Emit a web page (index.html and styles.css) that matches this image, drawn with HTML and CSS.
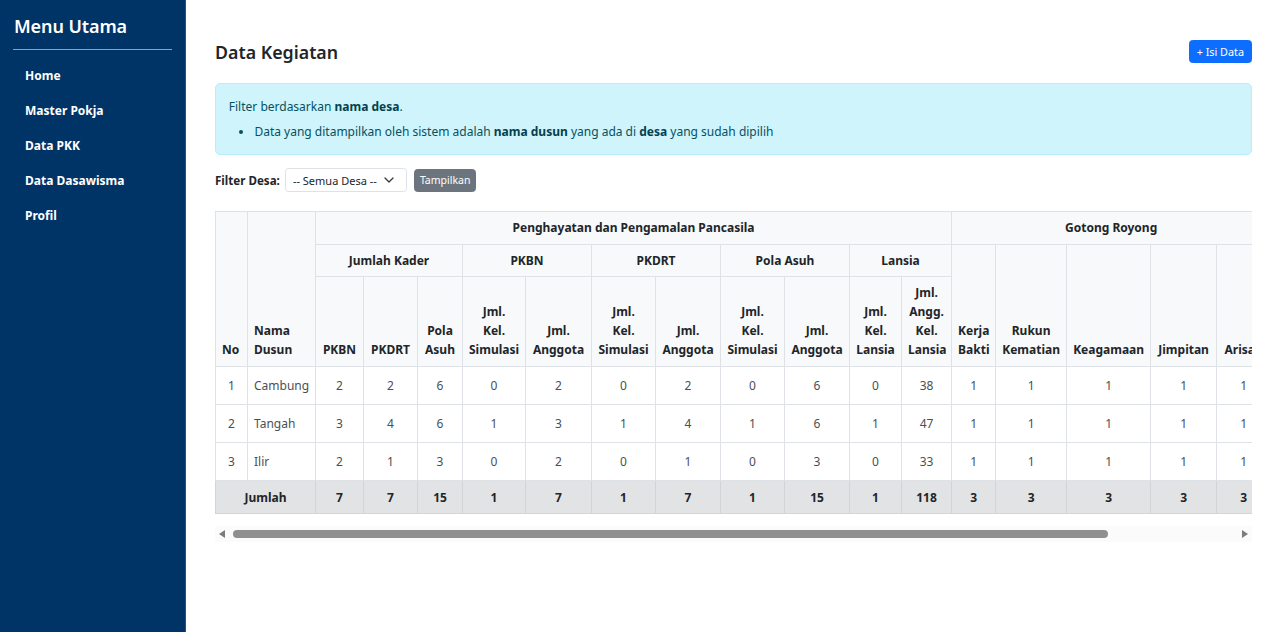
FILE: index.html
```html
<!DOCTYPE html>
<html lang="id">
<head>
<meta charset="utf-8">
<title>Data Kegiatan</title>
<link rel="stylesheet" href="styles.css">
</head>
<body>
<div class="layout">
  <aside class="sidebar">
    <h4 class="brand">Menu Utama</h4>
    <hr class="brand-line">
    <nav class="nav">
      <a class="nav-link" href="#">Home</a>
      <a class="nav-link" href="#">Master Pokja</a>
      <a class="nav-link" href="#">Data PKK</a>
      <a class="nav-link" href="#">Data Dasawisma</a>
      <a class="nav-link" href="#">Profil</a>
    </nav>
  </aside>

  <main class="main">
    <div class="page-head">
      <h3 class="page-title">Data Kegiatan</h3>
      <a class="btn btn-primary" href="#">+ Isi Data</a>
    </div>

    <div class="alert">
      <p class="alert-line">Filter berdasarkan <b>nama desa</b>.</p>
      <ul class="alert-list">
        <li>Data yang ditampilkan oleh sistem adalah <b>nama dusun</b> yang ada di <b>desa</b> yang sudah dipilih</li>
      </ul>
    </div>

    <form class="filter">
      <label class="filter-label">Filter Desa:</label>
      <div class="select">
        <span>-- Semua Desa --</span>
        <svg class="chev" width="10" height="6" viewBox="0 0 10 6"><path d="M1 1l4 4 4-4" fill="none" stroke="#343a40" stroke-width="1.3" stroke-linecap="round" stroke-linejoin="round"/></svg>
      </div>
      <button class="btn btn-secondary" type="button">Tampilkan</button>
    </form>

    <div class="table-wrap">
      <table class="data">
        <colgroup>
          <col class="c32"><col class="c68"><col class="c48"><col class="c54"><col class="c45">
          <col class="c63"><col class="c66"><col class="c64"><col class="c65"><col class="c64"><col class="c65">
          <col class="c52"><col class="c50">
          <col class="c44"><col class="c71"><col class="c84"><col class="c66"><col class="c54">
          <col class="c134">
        </colgroup>
        <thead>
          <tr class="h1">
            <th rowspan="3" class="tl">No</th>
            <th rowspan="3" class="tl">Nama<br>Dusun</th>
            <th colspan="11" class="mid">Penghayatan dan Pengamalan Pancasila</th>
            <th colspan="5" class="mid">Gotong Royong</th>
            <th rowspan="3">Keterangan</th>
          </tr>
          <tr class="h2">
            <th colspan="3" class="mid">Jumlah Kader</th>
            <th colspan="2" class="mid">PKBN</th>
            <th colspan="2" class="mid">PKDRT</th>
            <th colspan="2" class="mid">Pola Asuh</th>
            <th colspan="2" class="mid">Lansia</th>
            <th rowspan="2">Kerja<br>Bakti</th>
            <th rowspan="2">Rukun<br>Kematian</th>
            <th rowspan="2">Keagamaan</th>
            <th rowspan="2">Jimpitan</th>
            <th rowspan="2">Arisan</th>
          </tr>
          <tr class="h3">
            <th>PKBN</th>
            <th>PKDRT</th>
            <th>Pola<br>Asuh</th>
            <th>Jml.<br>Kel.<br>Simulasi</th>
            <th>Jml.<br>Anggota</th>
            <th>Jml.<br>Kel.<br>Simulasi</th>
            <th>Jml.<br>Anggota</th>
            <th>Jml.<br>Kel.<br>Simulasi</th>
            <th>Jml.<br>Anggota</th>
            <th>Jml.<br>Kel.<br>Lansia</th>
            <th>Jml.<br>Angg.<br>Kel.<br>Lansia</th>
          </tr>
        </thead>
        <tbody>
          <tr>
            <td>1</td><td class="tl">Cambung</td>
            <td>2</td><td>2</td><td>6</td><td>0</td><td>2</td><td>0</td><td>2</td><td>0</td><td>6</td><td>0</td><td>38</td>
            <td>1</td><td>1</td><td>1</td><td>1</td><td>1</td><td>-</td>
          </tr>
          <tr>
            <td>2</td><td class="tl">Tangah</td>
            <td>3</td><td>4</td><td>6</td><td>1</td><td>3</td><td>1</td><td>4</td><td>1</td><td>6</td><td>1</td><td>47</td>
            <td>1</td><td>1</td><td>1</td><td>1</td><td>1</td><td>-</td>
          </tr>
          <tr>
            <td>3</td><td class="tl">Ilir</td>
            <td>2</td><td>1</td><td>3</td><td>0</td><td>2</td><td>0</td><td>1</td><td>0</td><td>3</td><td>0</td><td>33</td>
            <td>1</td><td>1</td><td>1</td><td>1</td><td>1</td><td>-</td>
          </tr>
        </tbody>
        <tfoot>
          <tr>
            <th colspan="2">Jumlah</th>
            <th>7</th><th>7</th><th>15</th><th>1</th><th>7</th><th>1</th><th>7</th><th>1</th><th>15</th><th>1</th><th>118</th>
            <th>3</th><th>3</th><th>3</th><th>3</th><th>3</th><th></th>
          </tr>
        </tfoot>
      </table>
    </div>
    <div class="hscroll" aria-hidden="true">
      <span class="arrow arrow-left"></span>
      <div class="track"><div class="thumb"></div></div>
      <span class="arrow arrow-right"></span>
    </div>
  </main>
</div>
</body>
</html>
```

FILE: styles.css
```css
* { box-sizing: border-box; }

html, body {
  margin: 0;
  padding: 0;
  background: #ffffff;
}

body {
  font-family: "Noto Sans", "Open Sans", "Liberation Sans", sans-serif;
  font-size: 12px;
  line-height: 19.2px;
  color: #212529;
}

.layout {
  display: flex;
  min-height: 632px;
}

/* Sidebar */
.sidebar {
  width: 186px;
  flex: 0 0 186px;
  background: #003366;
  border-right: 1px solid #2b5580;
  padding: 13px 13px;
  color: #fff;
}

.brand {
  margin: 0;
  font-size: 18px;
  line-height: 26px;
  font-weight: 600;
  letter-spacing: -0.1px;
  padding-left: 1px;
}

.brand-line {
  margin: 10px 0 0;
  border: 0;
  border-top: 1px solid rgba(255, 255, 255, 0.55);
}

.nav {
  display: flex;
  flex-direction: column;
  margin-top: 8px;
}

.nav-link {
  color: #fff;
  text-decoration: none;
  font-weight: 700;
  font-size: 12px;
  line-height: 19px;
  padding: 8px 12px;
}

/* Main */
.main {
  flex: 1;
  min-width: 0;
  padding: 40px 28px 0 29px;
}

.page-head {
  display: flex;
  align-items: center;
  justify-content: space-between;
}

.page-title {
  margin: 0;
  font-size: 17.8px;
  line-height: 24px;
  font-weight: 600;
  color: #212529;
}

.btn {
  display: inline-block;
  border: 1px solid transparent;
  border-radius: 3.5px;
  font-family: inherit;
  font-size: 10.8px;
  line-height: 17px;
  padding: 2px 7px;
  text-decoration: none;
  color: #fff;
  cursor: pointer;
}

.btn-primary {
  background: #0d6efd;
  border-color: #0d6efd;
  margin-top: -1px;
}

.btn-secondary {
  background: #6c757d;
  border-color: #6c757d;
  font-size: 10.5px;
  padding: 2px 5px;
}

/* Alert */
.alert {
  margin-top: 19px;
  background: #cff4fc;
  border: 1px solid #b6effb;
  border-radius: 5px;
  color: #055160;
  padding: 12.8px 12.8px;
}

.alert b { font-weight: 700; color: #04414d; }

.alert-line {
  margin: 0 0 6.4px;
}

.alert-list {
  margin: 0;
  padding-left: 25.6px;
}

/* Filter */
.filter {
  display: flex;
  align-items: center;
  margin-top: 13px;
  height: 24px;
}

.filter-label {
  font-weight: 700;
  font-size: 11.6px;
  margin-right: 5px;
}

.select {
  display: flex;
  align-items: center;
  justify-content: space-between;
  width: 122px;
  height: 24px;
  padding: 0 12px 0 7px;
  border: 1px solid #dee2e6;
  border-radius: 3.5px;
  font-size: 11px;
  color: #212529;
  margin-right: 7px;
}

.chev { display: block; }

/* Table */
.table-wrap {
  margin-top: 19px;
  overflow: hidden;
}

.data {
  table-layout: fixed;
  width: 1189px;
  border-collapse: collapse;
  margin-bottom: 12px;
  font-size: 12px;
}

.c32 { width: 32px; }
.c44 { width: 44px; }
.c45 { width: 45px; }
.c48 { width: 48px; }
.c50 { width: 50px; }
.c52 { width: 52px; }
.c54 { width: 54px; }
.c63 { width: 63px; }
.c64 { width: 64px; }
.c65 { width: 65px; }
.c66 { width: 66px; }
.c68 { width: 68px; }
.c71 { width: 71px; }
.c84 { width: 84px; }
.c134 { width: 134px; }

.data th,
.data td {
  border: 1px solid #dee2e6;
  padding: 6px 6px;
  text-align: center;
  line-height: 19.2px;
  white-space: nowrap;
  overflow: hidden;
}

.data thead th {
  background: #f8f9fa;
  font-weight: 700;
  color: #212529;
  vertical-align: bottom;
}

.data thead th.mid {
  vertical-align: middle;
}

.data .tl { text-align: left; }

.data tbody td {
  padding: 9px 6px;
  color: #4a4f55;
  vertical-align: middle;
}

.data tfoot th {
  background: #e2e3e5;
  font-weight: 700;
  color: #212529;
  padding: 6.4px 6px;
  border-color: #d3d4d6;
}

/* Fake horizontal scrollbar */
.hscroll {
  display: flex;
  align-items: center;
  height: 16px;
  background: #fbfbfb;
}

.arrow {
  flex: 0 0 17px;
  height: 16px;
  display: flex;
  align-items: center;
  justify-content: center;
}

.arrow::before {
  content: "";
  display: block;
  width: 0;
  height: 0;
  border-top: 4.5px solid transparent;
  border-bottom: 4.5px solid transparent;
}

.arrow-left::before {
  border-right: 6px solid #7c7c7c;
  margin-right: 3px;
}

.arrow-right::before {
  border-left: 6px solid #7c7c7c;
  margin-left: 3px;
}

.track {
  flex: 1;
  height: 16px;
  display: flex;
  align-items: center;
  padding-left: 1px;
}

.thumb {
  width: 875px;
  height: 8px;
  border-radius: 4px;
  background: #8f8f8f;
}
```
